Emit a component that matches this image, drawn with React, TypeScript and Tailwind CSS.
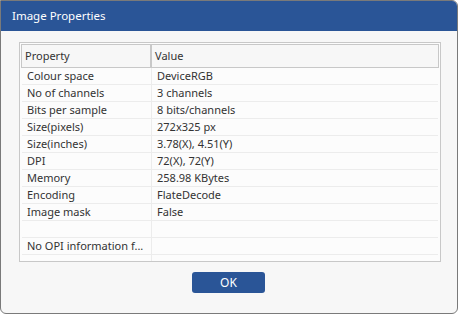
const rows: [string, string][] = [
  ["Colour space", "DeviceRGB"],
  ["No of channels", "3 channels"],
  ["Bits per sample", "8 bits/channels"],
  ["Size(pixels)", "272x325 px"],
  ["Size(inches)", "3.78(X), 4.51(Y)"],
  ["DPI", "72(X), 72(Y)"],
  ["Memory", "258.98 KBytes"],
  ["Encoding", "FlateDecode"],
  ["Image mask", "False"],
  ["", ""],
  ["No OPI information f...", ""],
  ["", ""],
];

export default function App() {
  return (
    <div className="w-[459px] h-[314px] bg-white font-['Noto_Sans',sans-serif]">
      <div className="w-[458px] h-[314px] border border-[#7a7a7a] rounded-tr-[6px] rounded-b-[6px] overflow-hidden flex flex-col bg-[#f7f7f7]">
        <div className="h-[30px] bg-[#2a5597] flex items-center pl-[11px] text-white text-[11.5px]">
          Image Properties
        </div>

        <div className="flex-1 flex flex-col pt-[11px]">
          <div className="ml-[18px] w-[422px] h-[220px] border border-[#c8c8c8] bg-[#fcfcfc] p-[1px] overflow-hidden text-[11px] text-[#333]">
            <div className="h-[24px] flex border border-[#c8c8c8] bg-[#f7f7f7]">
              <div className="w-[128px] pl-[3px] flex items-center">Property</div>
              <div className="w-[2px] bg-[#c8c8c8]" />
              <div className="flex-1 pl-[3px] flex items-center">Value</div>
            </div>
            {rows.map(([k, v], i) => (
              <div key={i} className="h-[17px] flex border-b border-[#ececec] mx-[1px]">
                <div className="w-[129px] pl-[5px] flex items-center whitespace-nowrap">{k}</div>
                <div className="w-[1px] bg-[#ececec]" />
                <div className="flex-1 pl-[5px] flex items-center whitespace-nowrap">{v}</div>
              </div>
            ))}
          </div>

          <button className="mt-[10px] ml-[191px] w-[73px] h-[21px] rounded-[3px] bg-[#2a5597] text-white text-[12px] flex items-center justify-center">
            OK
          </button>
        </div>
      </div>
    </div>
  );
}
